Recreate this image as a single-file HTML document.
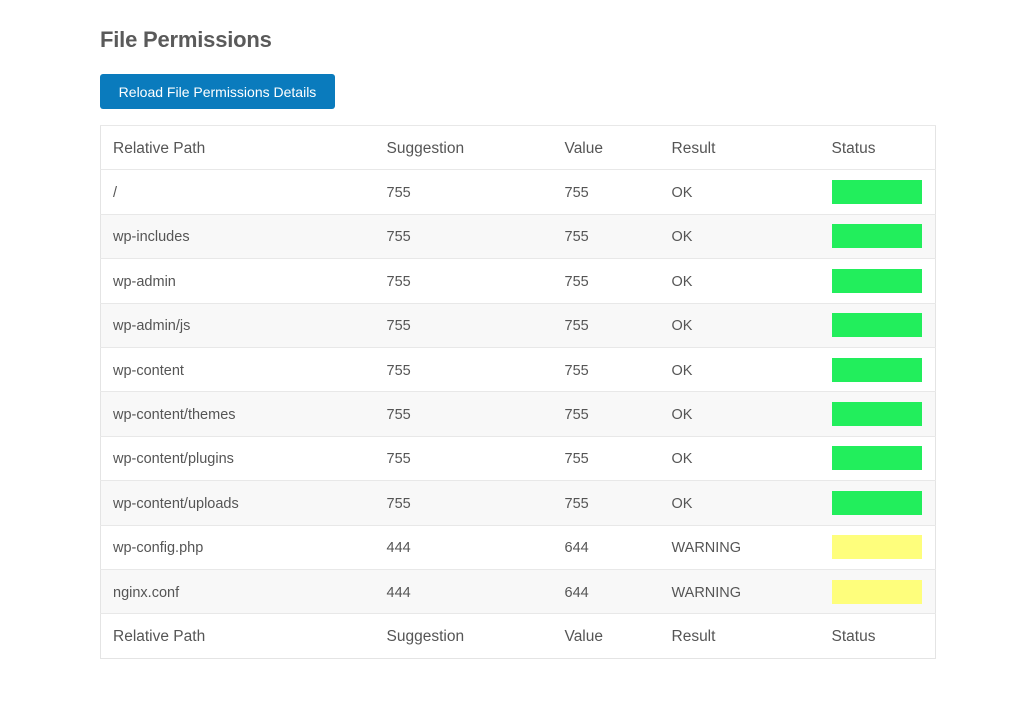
<!DOCTYPE html>
<html><head><style>
body{margin:0;background:#fff;font-family:"Liberation Sans",sans-serif;color:#555;}
h1{position:absolute;left:100px;top:27px;margin:0;font-size:22px;font-weight:bold;color:#5a5a5a;letter-spacing:-0.2px}
.btn{position:absolute;left:100px;top:74px;width:235px;height:35px;background:#0a7bbd;border-radius:3px;color:#fff;font-size:14px;line-height:37px;text-align:center}
table{position:absolute;left:100px;top:125px;width:836px;border-collapse:collapse;border:1px solid #e4e4e4;font-size:14.5px;table-layout:fixed}
td{height:41.4px;padding:2px 0 0 0;border-top:1px solid #e8e8e8;vertical-align:middle}
tr.s td{background:#f8f8f8}
td:nth-child(1){padding-left:12px}
.g,.y{display:block;width:90px;height:24px;background:#22ee5c;margin-top:-2px}
.y{background:#fefe7c}
thead td,tfoot td{color:#555;font-size:15.5px}
</style></head><body>
<h1>File Permissions</h1>
<div class="btn">Reload File Permissions Details</div>
<table>
<colgroup><col style="width:286px"><col style="width:178px"><col style="width:107px"><col style="width:160px"><col></colgroup>
<thead><tr><td>Relative Path</td><td>Suggestion</td><td>Value</td><td>Result</td><td>Status</td></tr></thead>
<tbody>
<tr><td>/</td><td>755</td><td>755</td><td>OK</td><td><span class="g"></span></td></tr>
<tr class="s"><td>wp-includes</td><td>755</td><td>755</td><td>OK</td><td><span class="g"></span></td></tr>
<tr><td>wp-admin</td><td>755</td><td>755</td><td>OK</td><td><span class="g"></span></td></tr>
<tr class="s"><td>wp-admin/js</td><td>755</td><td>755</td><td>OK</td><td><span class="g"></span></td></tr>
<tr><td>wp-content</td><td>755</td><td>755</td><td>OK</td><td><span class="g"></span></td></tr>
<tr class="s"><td>wp-content/themes</td><td>755</td><td>755</td><td>OK</td><td><span class="g"></span></td></tr>
<tr><td>wp-content/plugins</td><td>755</td><td>755</td><td>OK</td><td><span class="g"></span></td></tr>
<tr class="s"><td>wp-content/uploads</td><td>755</td><td>755</td><td>OK</td><td><span class="g"></span></td></tr>
<tr><td>wp-config.php</td><td>444</td><td>644</td><td>WARNING</td><td><span class="y"></span></td></tr>
<tr class="s"><td>nginx.conf</td><td>444</td><td>644</td><td>WARNING</td><td><span class="y"></span></td></tr>
</tbody>
<tfoot><tr><td>Relative Path</td><td>Suggestion</td><td>Value</td><td>Result</td><td>Status</td></tr></tfoot>
</table>
</body></html>
